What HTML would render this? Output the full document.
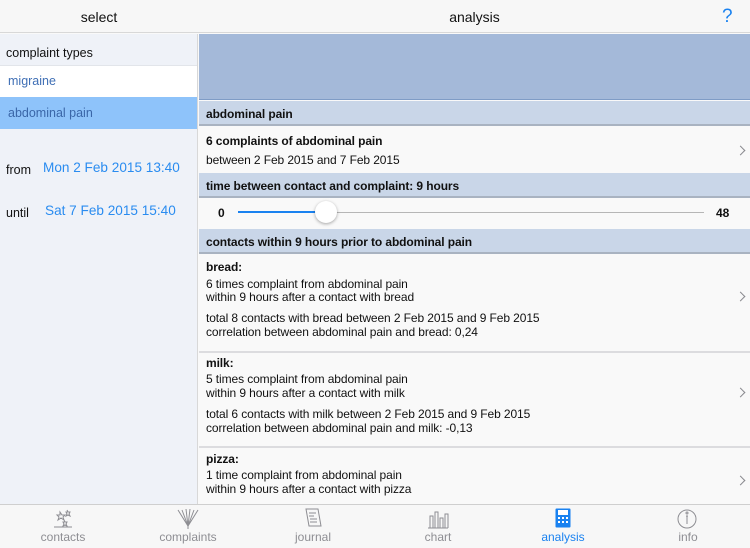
<!DOCTYPE html>
<html><head><meta charset="utf-8"><style>
*{margin:0;padding:0;box-sizing:border-box}
body{width:750px;height:548px;overflow:hidden;font-family:"Liberation Sans",sans-serif;background:#f9f9f9;position:relative}
.a{position:absolute;white-space:nowrap}
.t{font-size:12px;color:#111;line-height:14px;letter-spacing:-0.1px}
.b{font-weight:bold}
.hd{position:absolute;left:199px;width:551px;height:25px;background:#c9d6e8;border-bottom:2px solid #a9b3c1}
.hd span{position:absolute;left:7px;top:6px;font-size:12px;font-weight:bold;color:#111;letter-spacing:-0.1px}
.chev{position:absolute;right:6px;width:7px;height:7px;border-right:1.6px solid #8a8a8f;border-top:1.6px solid #8a8a8f;transform:rotate(45deg)}
.sep{position:absolute;left:199px;width:551px;height:2px;background:#dcdcdf}
.tab{position:absolute;top:530px;font-size:12px;color:#8e8e93;width:80px;text-align:center}
</style></head><body>
<div class="a" style="left:0;top:0;width:750px;height:33px;background:#f7f7f7;border-bottom:1px solid #d8d8d8"></div>
<div class="a" style="left:0;top:9px;width:198px;text-align:center;font-size:14px;color:#111">select</div>
<div class="a" style="left:199px;top:9px;width:551px;text-align:center;font-size:14px;color:#111">analysis</div>
<div class="a" style="left:722px;top:6px;font-size:19px;color:#1a82f0">?</div>
<div class="a" style="left:0;top:34px;width:198px;height:471px;background:#eff2f8;border-right:1px solid #d8d8d8"></div>
<div class="a" style="left:6px;top:46px;font-size:12.5px;color:#111">complaint types</div>
<div class="a" style="left:0;top:65px;width:197px;height:32px;background:#fff;border-top:1px solid #e2e5ea"></div>
<div class="a" style="left:8px;top:74px;font-size:12.5px;color:#3f6fb5">migraine</div>
<div class="a" style="left:0;top:97px;width:197px;height:32px;background:#8ec3fa"></div>
<div class="a" style="left:8px;top:106px;font-size:12.5px;color:#3a66a8">abdominal pain</div>
<div class="a" style="left:6px;top:163px;font-size:12.5px;color:#111">from</div>
<div class="a" style="left:43px;top:160px;font-size:13.6px;color:#2a8cf0">Mon 2 Feb 2015 13:40</div>
<div class="a" style="left:6px;top:206px;font-size:12.5px;color:#111">until</div>
<div class="a" style="left:45px;top:203px;font-size:13.6px;color:#2a8cf0">Sat 7 Feb 2015 15:40</div>
<div class="a" style="left:199px;top:34px;width:551px;height:66px;background:#a4b9d9;border-bottom:1px solid #7f9cc6"></div>
<div class="hd" style="top:101px"><span>abdominal pain</span></div>
<div class="a t b" style="left:206px;top:134px">6 complaints of abdominal pain</div>
<div class="a t" style="left:206px;top:153px">between 2 Feb 2015 and 7 Feb 2015</div>
<div class="chev" style="top:147px"></div>
<div class="hd" style="top:173px"><span>time between contact and complaint: 9 hours</span></div>
<div class="a t b" style="left:218px;top:206px">0</div>
<div class="a t b" style="left:716px;top:206px">48</div>
<div class="a" style="left:238px;top:211px;width:88px;height:2px;background:#1a82f0"></div>
<div class="a" style="left:326px;top:212px;width:378px;height:1px;background:#b6b6b6"></div>
<div class="a" style="left:315px;top:201px;width:22px;height:22px;border-radius:50%;background:#fff;box-shadow:0 1px 3px rgba(0,0,0,.35)"></div>
<div class="hd" style="top:229px"><span>contacts within 9 hours prior to abdominal pain</span></div>
<div class="a t b" style="left:206px;top:260px">bread:</div>
<div class="a t" style="left:206px;top:277px">6 times complaint from abdominal pain</div>
<div class="a t" style="left:206px;top:290px">within 9 hours after a contact with bread</div>
<div class="a t" style="left:206px;top:311px">total 8 contacts with bread between 2 Feb 2015 and 9 Feb 2015</div>
<div class="a t" style="left:206px;top:325px">correlation between abdominal pain and bread: 0,24</div>
<div class="chev" style="top:293px"></div>
<div class="sep" style="top:351px"></div>
<div class="a t b" style="left:206px;top:356px">milk:</div>
<div class="a t" style="left:206px;top:372px">5 times complaint from abdominal pain</div>
<div class="a t" style="left:206px;top:386px">within 9 hours after a contact with milk</div>
<div class="a t" style="left:206px;top:407px">total 6 contacts with milk between 2 Feb 2015 and 9 Feb 2015</div>
<div class="a t" style="left:206px;top:421px">correlation between abdominal pain and milk: -0,13</div>
<div class="chev" style="top:389px"></div>
<div class="sep" style="top:446px"></div>
<div class="a t b" style="left:206px;top:452px">pizza:</div>
<div class="a t" style="left:206px;top:468px">1 time complaint from abdominal pain</div>
<div class="a t" style="left:206px;top:482px">within 9 hours after a contact with pizza</div>
<div class="chev" style="top:477px"></div>
<div class="a" style="left:0;top:504px;width:750px;height:44px;background:#f7f7f7;border-top:1px solid #cfcfcf"></div>
<svg class="a" style="left:0;top:506px" width="750" height="24" fill="none" stroke="#8e8e93" stroke-width="1">
<path d="M60 6l2 3 3 0-2 2 1 3-3-2-3 2 1-3-2-2 3 0z M67 4l1 2 2 0-1 2 1 2-2-1-2 1 1-2-1-2 2 0z M64 14l1 2 2 0-1 2 1 2-2-1-2 1 1-2-1-2 2 0z M54 21h18"/>
<path d="M178 4l10 16 10-16 M182 4l6 16 6-16 M186 3l2 17 2-17 M188 20v3"/>
<path d="M306 3h12l3 17h-12z M309 7h7 M309 10h5 M310 13h7 M310 16h7"/>
<path d="M428 22h20 M430 22v-12h3v12 M435 22v-16h3v16 M440 22v-10h3v10 M445 22v-14h3v14"/>
<circle cx="687" cy="13" r="9"/><path d="M687 10v8 M686 10h2"/><circle cx="687" cy="7" r="1"/>
</svg>
<svg class="a" style="left:555px;top:508px" width="16" height="20"><rect x="0.5" y="0.5" width="15" height="19" rx="1" fill="#1a82f0"/><g fill="#fff"><rect x="3" y="2" width="10" height="5"/><rect x="3" y="9" width="2" height="2"/><rect x="7" y="9" width="2" height="2"/><rect x="11" y="9" width="2" height="2"/><rect x="3" y="13" width="2" height="2"/><rect x="7" y="13" width="2" height="2"/><rect x="11" y="13" width="2" height="2"/></g></svg>
<div class="tab" style="left:23px">contacts</div>
<div class="tab" style="left:148px">complaints</div>
<div class="tab" style="left:273px">journal</div>
<div class="tab" style="left:398px">chart</div>
<div class="tab" style="left:523px;color:#1a82f0">analysis</div>
<div class="tab" style="left:648px">info</div>
</body></html>
